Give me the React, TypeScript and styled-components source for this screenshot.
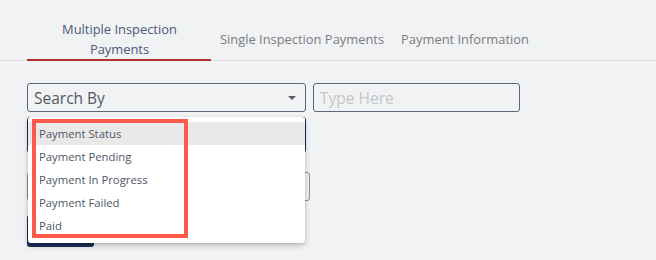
import React from "react";
import styled, { createGlobalStyle } from "styled-components";

const GlobalStyle = createGlobalStyle`
  html, body {
    margin: 0;
    padding: 0;
    background: #f1f2f4;
    font-family: "Open Sans", "Liberation Sans", sans-serif;
  }
`;

const Page = styled.div`
  width: 656px;
  height: 260px;
  overflow: hidden;
  background: #f1f2f4;
`;

const TabBar = styled.div`
  display: flex;
  align-items: stretch;
  padding-left: 27px;
  padding-top: 19px;
  border-bottom: 1px solid #dcdde0;
`;

const Tab = styled.div<{ $active?: boolean; $width?: number }>`
  display: flex;
  align-items: center;
  justify-content: center;
  text-align: center;
  box-sizing: border-box;
  width: ${(p) => (p.$width ? `${p.$width}px` : "auto")};
  padding: 0 8px 1px 9px;
  font-size: 12.9px;
  line-height: 20px;
  color: ${(p) => (p.$active ? "#4b5878" : "#7a7c80")};
  border-bottom: 2px solid ${(p) => (p.$active ? "#b3302f" : "transparent")};
  margin-bottom: -1px;
  height: 42px;
`;

const Body = styled.div`
  position: relative;
  padding: 22px 0 0 27px;
`;

const Row = styled.div`
  display: flex;
  gap: 7px;
`;

const Select = styled.div`
  position: relative;
  box-sizing: border-box;
  width: 279px;
  height: 29px;
  border: 1px solid #5d6577;
  border-radius: 3px;
  display: flex;
  align-items: center;
  padding-left: 6px;
  font-size: 15.5px;
  color: #555a62;
`;

const Caret = styled.span`
  position: absolute;
  right: 9px;
  top: 12px;
  width: 0;
  height: 0;
  border-left: 4px solid transparent;
  border-right: 4px solid transparent;
  border-top: 4px solid #5a5d63;
`;

const TextInput = styled.div`
  box-sizing: border-box;
  width: 207px;
  height: 29px;
  border: 1px solid #5d6577;
  border-radius: 3px;
  display: flex;
  align-items: center;
  padding-left: 6px;
  font-size: 15.5px;
  color: #c4c6c9;
`;

const Hidden = styled.div`
  display: flex;
  flex-direction: column;
  margin-top: 5px;
`;

const NavyBox = styled.div`
  box-sizing: border-box;
  width: 279px;
  height: 36px;
  border: 1px solid #1f2d55;
  border-radius: 3px;
`;

const GrayInput = styled.div`
  box-sizing: border-box;
  width: 283px;
  height: 29px;
  margin-top: 19px;
  border: 1px solid #8a8e96;
  border-radius: 3px;
`;

const NavyButton = styled.div`
  width: 67px;
  height: 32px;
  margin-top: 14px;
  background: #1f2d55;
  border-radius: 3px;
`;

const Menu = styled.div`
  position: absolute;
  left: 28px;
  top: 56px;
  width: 277px;
  padding: 5px 0 6px;
  background: #ffffff;
  border-radius: 3px;
  box-shadow: 0 3px 6px rgba(0, 0, 0, 0.18), 0 1px 3px rgba(0, 0, 0, 0.12);
`;

const Item = styled.div<{ $hover?: boolean }>`
  height: 23px;
  display: flex;
  align-items: center;
  padding-left: 11px;
  font-size: 11.3px;
  color: #4f5566;
  background: ${(p) => (p.$hover ? "#e9e9ea" : "transparent")};
`;

const Highlight = styled.div`
  position: absolute;
  left: 32px;
  top: 58px;
  width: 156px;
  height: 119px;
  box-sizing: border-box;
  border: 4px solid #fe5a4b;
  pointer-events: none;
`;

const options = [
  "Payment Status",
  "Payment Pending",
  "Payment In Progress",
  "Payment Failed",
  "Paid",
];

export default function App() {
  return (
    <Page>
      <GlobalStyle />
      <TabBar>
        <Tab $active $width={184}>
          Multiple Inspection
          <br />
          Payments
        </Tab>
        <Tab>Single Inspection Payments</Tab>
        <Tab>Payment Information</Tab>
      </TabBar>
      <Body>
        <Row>
          <Select>
            Search By
            <Caret />
          </Select>
          <TextInput>Type Here</TextInput>
        </Row>
        <Hidden>
          <NavyBox />
          <GrayInput />
          <NavyButton />
        </Hidden>
        <Menu>
          {options.map((o, i) => (
            <Item key={o} $hover={i === 0}>
              {o}
            </Item>
          ))}
        </Menu>
        <Highlight />
      </Body>
    </Page>
  );
}
